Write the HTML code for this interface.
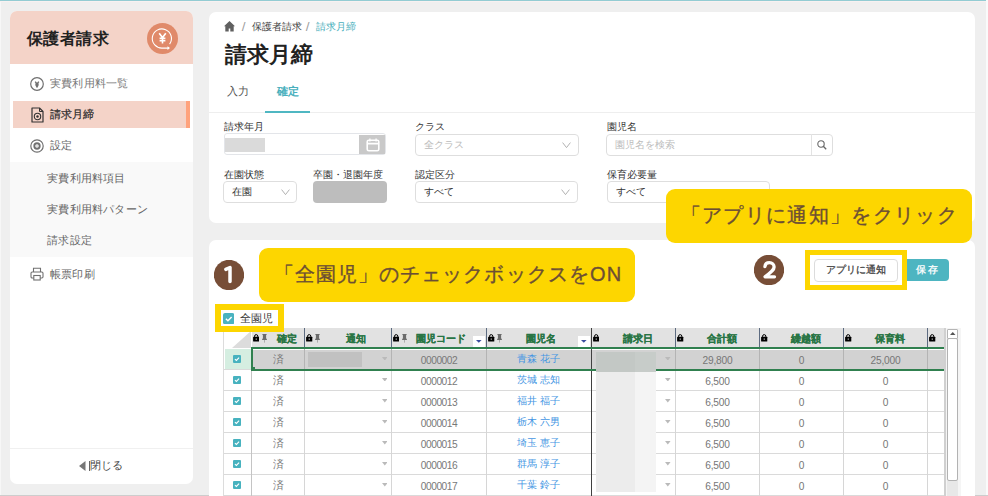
<!DOCTYPE html><html><head><meta charset="utf-8"><title>請求月締</title><style>
*{margin:0;padding:0;box-sizing:border-box}
html,body{width:988px;height:496px;overflow:hidden;background:#efefef;font-family:"Liberation Sans",sans-serif;color:#333}
.a{position:absolute;white-space:nowrap}
.card{position:absolute;background:#fff;border-radius:7px;overflow:hidden}
.t{position:absolute;white-space:nowrap;line-height:1}
</style></head><body>
<div class="a" style="left:0;top:0;width:986px;height:1px;background:#93ccd3"></div>
<div class="a" style="left:0;top:1px;width:986px;height:1px;background:#f8f1f1"></div>
<div class="a" style="left:0;top:2px;width:1px;height:494px;background:#f7f7f7"></div>
<div class="a" style="left:986px;top:0;width:2px;height:496px;background:#fafafa"></div>
<div class="a" style="left:0;top:495px;width:988px;height:1px;background:#cdcdcd"></div>
<div class="card" style="left:10px;top:11px;width:183px;height:473px">
<div class="a" style="left:0;top:0;width:183px;height:53px;background:#f4d3c8"></div>
<div class="t" style="left:16.8px;top:19.8px;font-size:16px;letter-spacing:0.5px;font-weight:bold;color:#222">保護者請求</div>
<svg class="a" style="left:137px;top:11.5px" width="31" height="31" viewBox="0 0 31 31">
<circle cx="15.5" cy="15.5" r="15.5" fill="#e08a6a"/>
<path d="M22.6 21.2 A9.6 9.6 0 1 0 15.5 25.1 L21.5 25.1" fill="none" stroke="#fff" stroke-width="1.1"/>
<path d="M20.5 23.3 L23 25.1 L20.5 26.9 Z" fill="#fff"/>
<path d="M12.2 10.2 L15.5 14.6 L18.8 10.2 M15.5 14.6 L15.5 20.6 M12.6 15.2 H18.4 M12.6 17.6 H18.4" fill="none" stroke="#fff" stroke-width="1.6"/>
</svg>
<svg class="a" style="left:20px;top:66px" width="14" height="14" viewBox="0 0 14 14">
<circle cx="7" cy="7" r="6.3" fill="none" stroke="#707070" stroke-width="1.2"/>
<path d="M5.2 4.6 L7 7 L8.8 4.6 M7 6.6 V10.4" fill="none" stroke="#707070" stroke-width="1.4"/><path d="M5.2 6.6 H8.8 L8.4 9 L7 10.6 L5.6 9 Z" fill="#707070"/>
</svg>
<div class="t" style="left:40px;top:67px;font-size:11.3px;letter-spacing:0.2px;color:#777">実費利用料一覧</div>
<div class="a" style="left:3px;top:89.5px;width:177px;height:27.5px;background:#f4d3c8"></div>
<div class="a" style="left:176px;top:89.5px;width:4px;height:27.5px;background:#ffa27c"></div>
<svg class="a" style="left:21px;top:96px" width="13" height="16" viewBox="0 0 13 16">
<path d="M1 1 H8.5 L12 4.5 V15 H1 Z" fill="none" stroke="#333" stroke-width="1.2" stroke-linejoin="round"/>
<path d="M8.5 1 V4.5 H12" fill="none" stroke="#333" stroke-width="1"/>
<circle cx="6.5" cy="9.5" r="3.2" fill="none" stroke="#333" stroke-width="1.1"/>
<circle cx="6.5" cy="9.5" r="1.2" fill="#333"/>
</svg>
<div class="t" style="left:40px;top:98px;font-size:11.3px;color:#2a2a2a;-webkit-text-stroke:0.2px #2a2a2a">請求月締</div>
<svg class="a" style="left:20px;top:127.5px" width="14" height="14" viewBox="0 0 14 14">
<circle cx="7" cy="7" r="6.2" fill="none" stroke="#707070" stroke-width="1.2"/>
<circle cx="7" cy="7" r="2.7" fill="none" stroke="#707070" stroke-width="1.9"/><circle cx="7" cy="7" r="0.7" fill="#aaa"/>
</svg>
<div class="t" style="left:40px;top:129px;font-size:11.3px;letter-spacing:0.2px;color:#666">設定</div>
<div class="a" style="left:0;top:151.3px;width:183px;height:94.4px;background:#f9f9f9"></div>
<div class="t" style="left:37.3px;top:161.5px;font-size:11.3px;letter-spacing:0.2px;color:#666">実費利用料項目</div>
<div class="t" style="left:37.3px;top:193px;font-size:11.3px;letter-spacing:0.2px;color:#666">実費利用料パターン</div>
<div class="t" style="left:37.3px;top:224px;font-size:11.3px;letter-spacing:0.2px;color:#666">請求設定</div>
<svg class="a" style="left:20px;top:256px" width="14" height="14" viewBox="0 0 14 14">
<path d="M3.5 5 V1.2 H10.5 V5" fill="none" stroke="#707070" stroke-width="1.1"/>
<rect x="1" y="5" width="12" height="6" rx="1.2" fill="none" stroke="#707070" stroke-width="1.1"/>
<rect x="3.8" y="8.5" width="6.4" height="4.5" fill="#fff" stroke="#707070" stroke-width="1.1"/>
</svg>
<div class="t" style="left:40px;top:258px;font-size:11.3px;letter-spacing:0.2px;color:#666">帳票印刷</div>
<div class="a" style="left:0;top:436.5px;width:183px;height:1px;background:#f0f0f0"></div>
<svg class="a" style="left:69px;top:449.5px" width="7" height="10" viewBox="0 0 7 10"><path d="M6.5 0 V10 L0 5 Z" fill="#777"/></svg>
<div class="a" style="left:78.7px;top:449.5px;width:1.3px;height:10px;background:#666"></div>
<div class="t" style="left:80px;top:448.5px;font-size:11.3px;color:#444">閉じる</div>
</div>
<div class="card" style="left:209px;top:12px;width:766px;height:211px">
<svg class="a" style="left:15px;top:9px" width="11" height="10.6" viewBox="0 0 11 10.6">
<path d="M5.5 0 L11 5.3 H9.7 V10.6 H6.3 V7.4 H4.7 V10.6 H1.3 V5.3 H0 Z" fill="#606060"/></svg>
<div class="t" style="left:32.8px;top:8.3px;font-size:13.5px;color:#a0a0a0">/</div>
<div class="t" style="left:43px;top:9.7px;font-size:9.8px;color:#444">保護者請求</div>
<div class="t" style="left:96.8px;top:8.3px;font-size:13.5px;color:#a0a0a0">/</div>
<div class="t" style="left:107px;top:9.7px;font-size:9.8px;color:#4ab0bd">請求月締</div>
<div class="t" style="left:15.5px;top:32.5px;font-size:21.5px;font-weight:bold;color:#222">請求月締</div>
<div class="t" style="left:17.5px;top:73.5px;font-size:11.3px;color:#555">入力</div>
<div class="t" style="left:68px;top:73.5px;font-size:11.3px;font-weight:bold;color:#4ab0bd">確定</div>
<div class="a" style="left:0;top:100px;width:766px;height:1px;background:#eeeeee"></div>
<div class="a" style="left:56.2px;top:98.8px;width:44.6px;height:1.8px;background:#4fb7c2"></div>
<div class="t" style="left:15px;top:109.5px;font-size:9.8px;color:#333">請求年月</div>
<div class="t" style="left:206px;top:109.5px;font-size:9.8px;color:#333">クラス</div>
<div class="t" style="left:397.5px;top:109.5px;font-size:9.8px;color:#333">園児名</div>
<div class="t" style="left:15px;top:157.5px;font-size:9.8px;color:#333">在園状態</div>
<div class="t" style="left:103.5px;top:157.5px;font-size:9.8px;color:#333">卒園・退園年度</div>
<div class="t" style="left:206px;top:157.5px;font-size:9.8px;color:#333">認定区分</div>
<div class="t" style="left:397.5px;top:157.5px;font-size:9.8px;color:#333">保育必要量</div>
<div class="a" style="left:14.5px;top:121.2px;width:162.5px;height:22.2px;border:1.5px solid #e3e5e9;border-radius:3px;background:#fff"></div>
<div class="a" style="left:16px;top:126px;width:40px;height:13.6px;background:#dadada"></div>
<div class="a" style="left:150.4px;top:123.1px;width:25.4px;height:18.7px;background:#c9c9c9"></div>
<svg class="a" style="left:156.5px;top:125.7px" width="14" height="14" viewBox="0 0 14 14">
<rect x="1.2" y="2.2" width="11.6" height="10.6" rx="1.6" fill="none" stroke="#fff" stroke-width="1.6"/>
<path d="M1.2 5.6 H12.8" stroke="#fff" stroke-width="1.6"/><path d="M3.9 0.6 V3.4 M10.1 0.6 V3.4" stroke="#fff" stroke-width="1.3"/></svg>
<div class="a" style="left:205.8px;top:121.5px;width:164px;height:22px;border:1px solid #dedede;border-radius:4px;background:#fff"></div>
<div class="t" style="left:214.8px;top:127.5px;font-size:10px;color:#bbb">全クラス</div>
<svg class="a" style="left:353.0px;top:129.5px" width="9" height="6.5" viewBox="0 0 9 6.5"><path d="M0.6 0.6 L4.5 5.6 L8.4 0.6" fill="none" stroke="#a8a8a8" stroke-width="0.9"/></svg>
<div class="a" style="left:397.4px;top:121.5px;width:226.5px;height:22px;border:1px solid #dedede;border-radius:4px;background:#fff"></div>
<div class="a" style="left:602px;top:122px;width:1px;height:21px;background:#e3e3e3"></div>
<div class="t" style="left:405.7px;top:127.5px;font-size:10px;color:#bbb">園児名を検索</div>
<svg class="a" style="left:608px;top:127.5px" width="10" height="10" viewBox="0 0 10 10">
<circle cx="4" cy="4" r="3.2" fill="none" stroke="#666" stroke-width="1.1"/><path d="M6.3 6.3 L9.2 9.2" stroke="#666" stroke-width="1.3"/></svg>
<div class="a" style="left:14.1px;top:169px;width:74.2px;height:22px;border:1px solid #dedede;border-radius:4px;background:#fff"></div>
<div class="t" style="left:23.1px;top:175px;font-size:10px;color:#333">在園</div>
<svg class="a" style="left:71.5px;top:177px" width="9" height="6.5" viewBox="0 0 9 6.5"><path d="M0.6 0.6 L4.5 5.6 L8.4 0.6" fill="none" stroke="#a8a8a8" stroke-width="0.9"/></svg>
<div class="a" style="left:103.5px;top:169px;width:74px;height:22px;border-radius:4px;background:#bdbdbd"></div>
<div class="a" style="left:205.6px;top:169.3px;width:163.5px;height:22px;border:1px solid #dedede;border-radius:4px;background:#fff"></div>
<div class="t" style="left:214.6px;top:175.3px;font-size:10px;color:#333">すべて</div>
<svg class="a" style="left:352.3px;top:177.3px" width="9" height="6.5" viewBox="0 0 9 6.5"><path d="M0.6 0.6 L4.5 5.6 L8.4 0.6" fill="none" stroke="#a8a8a8" stroke-width="0.9"/></svg>
<div class="a" style="left:397.5px;top:169px;width:163px;height:22px;border:1px solid #dedede;border-radius:4px;background:#fff"></div>
<div class="t" style="left:406.5px;top:175px;font-size:10px;color:#333">すべて</div>
</div>
<div class="card" style="left:209px;top:240px;width:766px;height:270px">
</div>
<div class="a" style="left:222.8px;top:328px;width:28.19999999999999px;height:168px;background:#fff;border-left:1px solid #dcdcdc"></div>
<svg class="a" style="left:232px;top:331px" width="19" height="17" viewBox="0 0 19 17"><path d="M19 0 V17 H0 Z" fill="#dcdcdc"/></svg>
<div class="a" style="left:251px;top:328px;width:693.5px;height:20px;background:#e2e2e2;border-left:1px solid #fff"></div>
<div class="a" style="left:223.5px;top:368.6px;width:721.0px;height:1px;background:#dadada"></div>
<div class="a" style="left:223.5px;top:389.7px;width:721.0px;height:1px;background:#dadada"></div>
<div class="a" style="left:223.5px;top:410.8px;width:721.0px;height:1px;background:#dadada"></div>
<div class="a" style="left:223.5px;top:431.9px;width:721.0px;height:1px;background:#dadada"></div>
<div class="a" style="left:223.5px;top:453.0px;width:721.0px;height:1px;background:#dadada"></div>
<div class="a" style="left:223.5px;top:474.1px;width:721.0px;height:1px;background:#dadada"></div>
<div class="a" style="left:223.5px;top:495.2px;width:721.0px;height:1px;background:#dadada"></div>
<div class="a" style="left:224.5px;top:349px;width:26.5px;height:20px;background:#d5eee1"></div>
<div class="a" style="left:252.5px;top:350px;width:692.0px;height:18.5px;background:#d2d2d2"></div>
<div class="a" style="left:304.0px;top:348px;width:1px;height:148px;background:#d6d6d6"></div>
<div class="a" style="left:390.5px;top:348px;width:1px;height:148px;background:#d6d6d6"></div>
<div class="a" style="left:486.0px;top:348px;width:1px;height:148px;background:#d6d6d6"></div>
<div class="a" style="left:675.0px;top:348px;width:1px;height:148px;background:#d6d6d6"></div>
<div class="a" style="left:759.0px;top:348px;width:1px;height:148px;background:#d6d6d6"></div>
<div class="a" style="left:843.0px;top:348px;width:1px;height:148px;background:#d6d6d6"></div>
<div class="a" style="left:927.0px;top:348px;width:1px;height:148px;background:#d6d6d6"></div>
<div class="a" style="left:304.0px;top:349px;width:1px;height:20px;background:#b4b4b4"></div>
<div class="a" style="left:390.5px;top:349px;width:1px;height:20px;background:#b4b4b4"></div>
<div class="a" style="left:486.0px;top:349px;width:1px;height:20px;background:#b4b4b4"></div>
<div class="a" style="left:675.0px;top:349px;width:1px;height:20px;background:#b4b4b4"></div>
<div class="a" style="left:759.0px;top:349px;width:1px;height:20px;background:#b4b4b4"></div>
<div class="a" style="left:843.0px;top:349px;width:1px;height:20px;background:#b4b4b4"></div>
<div class="a" style="left:927.0px;top:349px;width:1px;height:20px;background:#b4b4b4"></div>
<div class="a" style="left:304.0px;top:328px;width:1px;height:20px;background:#5d6b80"></div>
<div class="a" style="left:390.5px;top:328px;width:1px;height:20px;background:#5d6b80"></div>
<div class="a" style="left:486.0px;top:328px;width:1px;height:20px;background:#5d6b80"></div>
<div class="a" style="left:590.5px;top:328px;width:1px;height:20px;background:#5d6b80"></div>
<div class="a" style="left:675.0px;top:328px;width:1px;height:20px;background:#5d6b80"></div>
<div class="a" style="left:759.0px;top:328px;width:1px;height:20px;background:#5d6b80"></div>
<div class="a" style="left:843.0px;top:328px;width:1px;height:20px;background:#5d6b80"></div>
<div class="a" style="left:927.0px;top:328px;width:1px;height:20px;background:#5d6b80"></div>
<div class="a" style="left:250.5px;top:348px;width:1px;height:148px;background:#c4c4c4"></div>
<div class="a" style="left:590.5px;top:328px;width:1.2px;height:168px;background:#404040"></div>
<svg class="a" style="left:252.7px;top:334.1px" width="6.4" height="7.6" viewBox="0 0 6.4 7.6"><path d="M1.6 3.2 V2.2 A1.6 1.6 0 0 1 4.8 2.2 V3.2" fill="none" stroke="#000" stroke-width="1"/><rect x="0.1" y="2.8" width="6.2" height="4.8" rx="0.5" fill="#000"/><rect x="2.7" y="4.6" width="1.1" height="1" fill="#fff"/></svg>
<svg class="a" style="left:261.6px;top:334px" width="5" height="8.6" viewBox="0 0 5 8.6"><path d="M0.4 0 H4.6 V1.1 H4.1 V4.2 L4.9 5.2 V6 H0.1 V5.2 L0.9 4.2 V1.1 H0.4 Z" fill="#6b6b6b"/><rect x="2.1" y="6" width="0.8" height="2.6" fill="#a0a0a0"/></svg>
<svg class="a" style="left:306.2px;top:334.1px" width="6.4" height="7.6" viewBox="0 0 6.4 7.6"><path d="M1.6 3.2 V2.2 A1.6 1.6 0 0 1 4.8 2.2 V3.2" fill="none" stroke="#000" stroke-width="1"/><rect x="0.1" y="2.8" width="6.2" height="4.8" rx="0.5" fill="#000"/><rect x="2.7" y="4.6" width="1.1" height="1" fill="#fff"/></svg>
<svg class="a" style="left:315.1px;top:334px" width="5" height="8.6" viewBox="0 0 5 8.6"><path d="M0.4 0 H4.6 V1.1 H4.1 V4.2 L4.9 5.2 V6 H0.1 V5.2 L0.9 4.2 V1.1 H0.4 Z" fill="#6b6b6b"/><rect x="2.1" y="6" width="0.8" height="2.6" fill="#a0a0a0"/></svg>
<svg class="a" style="left:392.7px;top:334.1px" width="6.4" height="7.6" viewBox="0 0 6.4 7.6"><path d="M1.6 3.2 V2.2 A1.6 1.6 0 0 1 4.8 2.2 V3.2" fill="none" stroke="#000" stroke-width="1"/><rect x="0.1" y="2.8" width="6.2" height="4.8" rx="0.5" fill="#000"/><rect x="2.7" y="4.6" width="1.1" height="1" fill="#fff"/></svg>
<svg class="a" style="left:401.6px;top:334px" width="5" height="8.6" viewBox="0 0 5 8.6"><path d="M0.4 0 H4.6 V1.1 H4.1 V4.2 L4.9 5.2 V6 H0.1 V5.2 L0.9 4.2 V1.1 H0.4 Z" fill="#6b6b6b"/><rect x="2.1" y="6" width="0.8" height="2.6" fill="#a0a0a0"/></svg>
<svg class="a" style="left:488.2px;top:334.1px" width="6.4" height="7.6" viewBox="0 0 6.4 7.6"><path d="M1.6 3.2 V2.2 A1.6 1.6 0 0 1 4.8 2.2 V3.2" fill="none" stroke="#000" stroke-width="1"/><rect x="0.1" y="2.8" width="6.2" height="4.8" rx="0.5" fill="#000"/><rect x="2.7" y="4.6" width="1.1" height="1" fill="#fff"/></svg>
<svg class="a" style="left:497.1px;top:334px" width="5" height="8.6" viewBox="0 0 5 8.6"><path d="M0.4 0 H4.6 V1.1 H4.1 V4.2 L4.9 5.2 V6 H0.1 V5.2 L0.9 4.2 V1.1 H0.4 Z" fill="#6b6b6b"/><rect x="2.1" y="6" width="0.8" height="2.6" fill="#a0a0a0"/></svg>
<svg class="a" style="left:592.7px;top:334.1px" width="6.4" height="7.6" viewBox="0 0 6.4 7.6"><path d="M1.6 3.2 V2.2 A1.6 1.6 0 0 1 4.8 2.2 V3.2" fill="none" stroke="#000" stroke-width="1"/><rect x="0.1" y="2.8" width="6.2" height="4.8" rx="0.5" fill="#000"/><rect x="2.7" y="4.6" width="1.1" height="1" fill="#fff"/></svg>
<svg class="a" style="left:677.2px;top:334.1px" width="6.4" height="7.6" viewBox="0 0 6.4 7.6"><path d="M1.6 3.2 V2.2 A1.6 1.6 0 0 1 4.8 2.2 V3.2" fill="none" stroke="#000" stroke-width="1"/><rect x="0.1" y="2.8" width="6.2" height="4.8" rx="0.5" fill="#000"/><rect x="2.7" y="4.6" width="1.1" height="1" fill="#fff"/></svg>
<svg class="a" style="left:761.2px;top:334.1px" width="6.4" height="7.6" viewBox="0 0 6.4 7.6"><path d="M1.6 3.2 V2.2 A1.6 1.6 0 0 1 4.8 2.2 V3.2" fill="none" stroke="#000" stroke-width="1"/><rect x="0.1" y="2.8" width="6.2" height="4.8" rx="0.5" fill="#000"/><rect x="2.7" y="4.6" width="1.1" height="1" fill="#fff"/></svg>
<svg class="a" style="left:845.2px;top:334.1px" width="6.4" height="7.6" viewBox="0 0 6.4 7.6"><path d="M1.6 3.2 V2.2 A1.6 1.6 0 0 1 4.8 2.2 V3.2" fill="none" stroke="#000" stroke-width="1"/><rect x="0.1" y="2.8" width="6.2" height="4.8" rx="0.5" fill="#000"/><rect x="2.7" y="4.6" width="1.1" height="1" fill="#fff"/></svg>
<svg class="a" style="left:929.2px;top:334.1px" width="6.4" height="7.6" viewBox="0 0 6.4 7.6"><path d="M1.6 3.2 V2.2 A1.6 1.6 0 0 1 4.8 2.2 V3.2" fill="none" stroke="#000" stroke-width="1"/><rect x="0.1" y="2.8" width="6.2" height="4.8" rx="0.5" fill="#000"/><rect x="2.7" y="4.6" width="1.1" height="1" fill="#fff"/></svg>
<div class="t" style="left:246.7px;top:333.8px;width:80px;text-align:center;font-size:10px;font-weight:bold;color:#287544;-webkit-text-stroke:0.15px #287544">確定</div>
<div class="t" style="left:316.2px;top:333.8px;width:80px;text-align:center;font-size:10px;font-weight:bold;color:#287544;-webkit-text-stroke:0.15px #287544">通知</div>
<div class="t" style="left:400.5px;top:333.8px;width:80px;text-align:center;font-size:10px;font-weight:bold;color:#287544;-webkit-text-stroke:0.15px #287544">園児コード</div>
<div class="t" style="left:501px;top:333.8px;width:80px;text-align:center;font-size:10px;font-weight:bold;color:#287544;-webkit-text-stroke:0.15px #287544">園児名</div>
<div class="t" style="left:597.7px;top:333.8px;width:80px;text-align:center;font-size:10px;font-weight:bold;color:#287544;-webkit-text-stroke:0.15px #287544">請求日</div>
<div class="t" style="left:681.8px;top:333.8px;width:80px;text-align:center;font-size:10px;font-weight:bold;color:#287544;-webkit-text-stroke:0.15px #287544">合計額</div>
<div class="t" style="left:766px;top:333.8px;width:80px;text-align:center;font-size:10px;font-weight:bold;color:#287544;-webkit-text-stroke:0.15px #287544">繰越額</div>
<div class="t" style="left:850px;top:333.8px;width:80px;text-align:center;font-size:10px;font-weight:bold;color:#287544;-webkit-text-stroke:0.15px #287544">保育料</div>
<div class="a" style="left:473px;top:336px;width:11.5px;height:11px;background:#fff"></div>
<svg class="a" style="left:476.2px;top:340px" width="5.6" height="2.8" viewBox="0 0 5.6 2.8"><path d="M0 0 H5.6 L2.8 2.8 Z" fill="#3b4d9e"/></svg>
<div class="a" style="left:578px;top:336px;width:11.5px;height:11px;background:#fff"></div>
<svg class="a" style="left:581.2px;top:340px" width="5.6" height="2.8" viewBox="0 0 5.6 2.8"><path d="M0 0 H5.6 L2.8 2.8 Z" fill="#3b4d9e"/></svg>
<svg class="a" style="left:233.4px;top:354.6px" width="8" height="8" viewBox="0 0 8 8"><rect width="8" height="8" rx="1" fill="#47b2bf"/><path d="M1.9 4.1 L3.4 5.5 L6.1 2.7" fill="none" stroke="#fff" stroke-width="1.1"/></svg>
<div class="t" style="left:263px;top:353.7px;width:31px;text-align:center;font-size:11.2px;color:#7a7a7a">済</div>
<svg class="a" style="left:381.5px;top:356.75px" width="5.6" height="3.6" viewBox="0 0 5.6 3.6"><path d="M0 0 H5.6 L2.8 3.6 Z" fill="#bababa"/></svg>
<div class="t" style="left:399px;top:355.6px;width:80px;text-align:center;font-size:10.2px;letter-spacing:-0.45px;color:#787878">0000002</div>
<div class="t" style="left:498px;top:353.6px;width:81px;text-align:center;font-size:10.2px;color:#4596e3">青森 花子</div>
<svg class="a" style="left:665.3px;top:356.75px" width="5.6" height="3.6" viewBox="0 0 5.6 3.6"><path d="M0 0 H5.6 L2.8 3.6 Z" fill="#bababa"/></svg>
<div class="t" style="left:683px;top:355.6px;width:69px;text-align:center;font-size:10.2px;letter-spacing:-0.2px;color:#767676">29,800</div>
<div class="t" style="left:767px;top:355.6px;width:69px;text-align:center;font-size:10.2px;letter-spacing:-0.2px;color:#767676">0</div>
<div class="t" style="left:851px;top:355.6px;width:69px;text-align:center;font-size:10.2px;letter-spacing:-0.2px;color:#767676">25,000</div>
<svg class="a" style="left:233.4px;top:375.7px" width="8" height="8" viewBox="0 0 8 8"><rect width="8" height="8" rx="1" fill="#47b2bf"/><path d="M1.9 4.1 L3.4 5.5 L6.1 2.7" fill="none" stroke="#fff" stroke-width="1.1"/></svg>
<div class="t" style="left:263px;top:374.8px;width:31px;text-align:center;font-size:11.2px;color:#7a7a7a">済</div>
<svg class="a" style="left:381.5px;top:377.85px" width="5.6" height="3.6" viewBox="0 0 5.6 3.6"><path d="M0 0 H5.6 L2.8 3.6 Z" fill="#bababa"/></svg>
<div class="t" style="left:399px;top:376.7px;width:80px;text-align:center;font-size:10.2px;letter-spacing:-0.45px;color:#787878">0000012</div>
<div class="t" style="left:498px;top:374.7px;width:81px;text-align:center;font-size:10.2px;color:#4596e3">茨城 志知</div>
<svg class="a" style="left:665.3px;top:377.85px" width="5.6" height="3.6" viewBox="0 0 5.6 3.6"><path d="M0 0 H5.6 L2.8 3.6 Z" fill="#bababa"/></svg>
<div class="t" style="left:683px;top:376.7px;width:69px;text-align:center;font-size:10.2px;letter-spacing:-0.2px;color:#767676">6,500</div>
<div class="t" style="left:767px;top:376.7px;width:69px;text-align:center;font-size:10.2px;letter-spacing:-0.2px;color:#767676">0</div>
<div class="t" style="left:851px;top:376.7px;width:69px;text-align:center;font-size:10.2px;letter-spacing:-0.2px;color:#767676">0</div>
<svg class="a" style="left:233.4px;top:396.8px" width="8" height="8" viewBox="0 0 8 8"><rect width="8" height="8" rx="1" fill="#47b2bf"/><path d="M1.9 4.1 L3.4 5.5 L6.1 2.7" fill="none" stroke="#fff" stroke-width="1.1"/></svg>
<div class="t" style="left:263px;top:395.9px;width:31px;text-align:center;font-size:11.2px;color:#7a7a7a">済</div>
<svg class="a" style="left:381.5px;top:398.95px" width="5.6" height="3.6" viewBox="0 0 5.6 3.6"><path d="M0 0 H5.6 L2.8 3.6 Z" fill="#bababa"/></svg>
<div class="t" style="left:399px;top:397.8px;width:80px;text-align:center;font-size:10.2px;letter-spacing:-0.45px;color:#787878">0000013</div>
<div class="t" style="left:498px;top:395.8px;width:81px;text-align:center;font-size:10.2px;color:#4596e3">福井 福子</div>
<svg class="a" style="left:665.3px;top:398.95px" width="5.6" height="3.6" viewBox="0 0 5.6 3.6"><path d="M0 0 H5.6 L2.8 3.6 Z" fill="#bababa"/></svg>
<div class="t" style="left:683px;top:397.8px;width:69px;text-align:center;font-size:10.2px;letter-spacing:-0.2px;color:#767676">6,500</div>
<div class="t" style="left:767px;top:397.8px;width:69px;text-align:center;font-size:10.2px;letter-spacing:-0.2px;color:#767676">0</div>
<div class="t" style="left:851px;top:397.8px;width:69px;text-align:center;font-size:10.2px;letter-spacing:-0.2px;color:#767676">0</div>
<svg class="a" style="left:233.4px;top:417.9px" width="8" height="8" viewBox="0 0 8 8"><rect width="8" height="8" rx="1" fill="#47b2bf"/><path d="M1.9 4.1 L3.4 5.5 L6.1 2.7" fill="none" stroke="#fff" stroke-width="1.1"/></svg>
<div class="t" style="left:263px;top:417.0px;width:31px;text-align:center;font-size:11.2px;color:#7a7a7a">済</div>
<svg class="a" style="left:381.5px;top:420.05px" width="5.6" height="3.6" viewBox="0 0 5.6 3.6"><path d="M0 0 H5.6 L2.8 3.6 Z" fill="#bababa"/></svg>
<div class="t" style="left:399px;top:418.9px;width:80px;text-align:center;font-size:10.2px;letter-spacing:-0.45px;color:#787878">0000014</div>
<div class="t" style="left:498px;top:416.9px;width:81px;text-align:center;font-size:10.2px;color:#4596e3">栃木 六男</div>
<svg class="a" style="left:665.3px;top:420.05px" width="5.6" height="3.6" viewBox="0 0 5.6 3.6"><path d="M0 0 H5.6 L2.8 3.6 Z" fill="#bababa"/></svg>
<div class="t" style="left:683px;top:418.9px;width:69px;text-align:center;font-size:10.2px;letter-spacing:-0.2px;color:#767676">6,500</div>
<div class="t" style="left:767px;top:418.9px;width:69px;text-align:center;font-size:10.2px;letter-spacing:-0.2px;color:#767676">0</div>
<div class="t" style="left:851px;top:418.9px;width:69px;text-align:center;font-size:10.2px;letter-spacing:-0.2px;color:#767676">0</div>
<svg class="a" style="left:233.4px;top:438.9px" width="8" height="8" viewBox="0 0 8 8"><rect width="8" height="8" rx="1" fill="#47b2bf"/><path d="M1.9 4.1 L3.4 5.5 L6.1 2.7" fill="none" stroke="#fff" stroke-width="1.1"/></svg>
<div class="t" style="left:263px;top:438.1px;width:31px;text-align:center;font-size:11.2px;color:#7a7a7a">済</div>
<svg class="a" style="left:381.5px;top:441.15px" width="5.6" height="3.6" viewBox="0 0 5.6 3.6"><path d="M0 0 H5.6 L2.8 3.6 Z" fill="#bababa"/></svg>
<div class="t" style="left:399px;top:439.9px;width:80px;text-align:center;font-size:10.2px;letter-spacing:-0.45px;color:#787878">0000015</div>
<div class="t" style="left:498px;top:437.9px;width:81px;text-align:center;font-size:10.2px;color:#4596e3">埼玉 恵子</div>
<svg class="a" style="left:665.3px;top:441.15px" width="5.6" height="3.6" viewBox="0 0 5.6 3.6"><path d="M0 0 H5.6 L2.8 3.6 Z" fill="#bababa"/></svg>
<div class="t" style="left:683px;top:439.9px;width:69px;text-align:center;font-size:10.2px;letter-spacing:-0.2px;color:#767676">6,500</div>
<div class="t" style="left:767px;top:439.9px;width:69px;text-align:center;font-size:10.2px;letter-spacing:-0.2px;color:#767676">0</div>
<div class="t" style="left:851px;top:439.9px;width:69px;text-align:center;font-size:10.2px;letter-spacing:-0.2px;color:#767676">0</div>
<svg class="a" style="left:233.4px;top:460.1px" width="8" height="8" viewBox="0 0 8 8"><rect width="8" height="8" rx="1" fill="#47b2bf"/><path d="M1.9 4.1 L3.4 5.5 L6.1 2.7" fill="none" stroke="#fff" stroke-width="1.1"/></svg>
<div class="t" style="left:263px;top:459.2px;width:31px;text-align:center;font-size:11.2px;color:#7a7a7a">済</div>
<svg class="a" style="left:381.5px;top:462.25px" width="5.6" height="3.6" viewBox="0 0 5.6 3.6"><path d="M0 0 H5.6 L2.8 3.6 Z" fill="#bababa"/></svg>
<div class="t" style="left:399px;top:461.1px;width:80px;text-align:center;font-size:10.2px;letter-spacing:-0.45px;color:#787878">0000016</div>
<div class="t" style="left:498px;top:459.1px;width:81px;text-align:center;font-size:10.2px;color:#4596e3">群馬 淳子</div>
<svg class="a" style="left:665.3px;top:462.25px" width="5.6" height="3.6" viewBox="0 0 5.6 3.6"><path d="M0 0 H5.6 L2.8 3.6 Z" fill="#bababa"/></svg>
<div class="t" style="left:683px;top:461.1px;width:69px;text-align:center;font-size:10.2px;letter-spacing:-0.2px;color:#767676">6,500</div>
<div class="t" style="left:767px;top:461.1px;width:69px;text-align:center;font-size:10.2px;letter-spacing:-0.2px;color:#767676">0</div>
<div class="t" style="left:851px;top:461.1px;width:69px;text-align:center;font-size:10.2px;letter-spacing:-0.2px;color:#767676">0</div>
<svg class="a" style="left:233.4px;top:481.2px" width="8" height="8" viewBox="0 0 8 8"><rect width="8" height="8" rx="1" fill="#47b2bf"/><path d="M1.9 4.1 L3.4 5.5 L6.1 2.7" fill="none" stroke="#fff" stroke-width="1.1"/></svg>
<div class="t" style="left:263px;top:480.3px;width:31px;text-align:center;font-size:11.2px;color:#7a7a7a">済</div>
<svg class="a" style="left:381.5px;top:483.35px" width="5.6" height="3.6" viewBox="0 0 5.6 3.6"><path d="M0 0 H5.6 L2.8 3.6 Z" fill="#bababa"/></svg>
<div class="t" style="left:399px;top:482.2px;width:80px;text-align:center;font-size:10.2px;letter-spacing:-0.45px;color:#787878">0000017</div>
<div class="t" style="left:498px;top:480.2px;width:81px;text-align:center;font-size:10.2px;color:#4596e3">千葉 鈴子</div>
<svg class="a" style="left:665.3px;top:483.35px" width="5.6" height="3.6" viewBox="0 0 5.6 3.6"><path d="M0 0 H5.6 L2.8 3.6 Z" fill="#bababa"/></svg>
<div class="t" style="left:683px;top:482.2px;width:69px;text-align:center;font-size:10.2px;letter-spacing:-0.2px;color:#767676">6,500</div>
<div class="t" style="left:767px;top:482.2px;width:69px;text-align:center;font-size:10.2px;letter-spacing:-0.2px;color:#767676">0</div>
<div class="t" style="left:851px;top:482.2px;width:69px;text-align:center;font-size:10.2px;letter-spacing:-0.2px;color:#767676">0</div>
<div class="a" style="left:251px;top:347.4px;width:693.5px;height:1.6px;background:#30804f"></div>
<div class="a" style="left:251px;top:368.9px;width:693.5px;height:1.7px;background:#30804f"></div>
<div class="a" style="left:251px;top:347.4px;width:1.6px;height:23px;background:#30804f"></div>
<div class="a" style="left:250.5px;top:367.3px;width:4px;height:4px;background:#30804f"></div>
<div class="a" style="left:308px;top:352px;width:54px;height:14.6px;background:#c1c1c1"></div>
<div class="a" style="left:595.7px;top:351.7px;width:39.6px;height:140.3px;background:#ececec"></div>
<div class="a" style="left:635.3px;top:351.7px;width:20.4px;height:140.3px;background:#f4f4f4"></div>
<div class="a" style="left:595.7px;top:351.7px;width:39.6px;height:20.5px;background:#c3c8c5"></div>
<div class="a" style="left:635.3px;top:351.7px;width:20.4px;height:20.5px;background:#c7ccc9"></div>
<div class="a" style="left:944.3px;top:328px;width:1.7px;height:168px;background:#d0d0d0"></div>
<div class="a" style="left:946px;top:327.5px;width:15px;height:168.5px;background:#f5f5f5"></div>
<div class="a" style="left:947.3px;top:338px;width:10.4px;height:158px;background:#e8e8e8"></div>
<div class="a" style="left:947.2px;top:328.5px;width:10.6px;height:10.3px;background:#fff;border:1px solid #b5b5b5;border-radius:1px"></div>
<svg class="a" style="left:950px;top:331.5px" width="5.5" height="3" viewBox="0 0 5.5 3"><path d="M0 3 H5.5 L2.75 0 Z" fill="#555"/></svg>
<div class="a" style="left:947.2px;top:338px;width:10.6px;height:142.5px;background:#fff;border:1px solid #b2b2b2;border-radius:2px"></div>
<div class="a" style="left:666px;top:189px;width:305.6px;height:53.8px;background:#fdd600;border-radius:9px"></div>
<div class="t" style="left:680.5px;top:204.5px;font-size:20px;font-weight:500;letter-spacing:1.35px;color:#6c4e34;-webkit-text-stroke:0.35px #6c4e34">「アプリに通知」をクリック</div>
<div class="a" style="left:259px;top:248px;width:376.4px;height:54px;background:#fdd600;border-radius:9px"></div>
<div class="t" style="left:273.5px;top:263.5px;font-size:20px;font-weight:500;letter-spacing:1.1px;color:#6c4e34;-webkit-text-stroke:0.35px #6c4e34">「全園児」のチェックボックスをON</div>
<svg class="a" style="left:214.2px;top:259.6px" width="30" height="30" viewBox="0 0 30 30"><circle cx="15" cy="15" r="15.2" fill="#774e37"/><path d="M11.8 9.4 L16 7.5 V21.4" fill="none" stroke="#fff" stroke-width="3.5" stroke-linecap="round" stroke-linejoin="round"/></svg>
<svg class="a" style="left:754.2px;top:254.5px" width="30" height="30" viewBox="0 0 30 30"><circle cx="15" cy="15" r="15.2" fill="#774e37"/><path d="M10.9 11.6 C11.2 9 13 7.7 15.4 7.7 C18.2 7.7 20.1 9.5 20.1 11.9 C20.1 14.6 17.8 16.6 11 21.8 H20.5" fill="none" stroke="#fff" stroke-width="3.3" stroke-linecap="round" stroke-linejoin="round"/></svg>
<div class="a" style="left:215px;top:304px;width:69px;height:27.5px;border:6px solid #fdd600;background:#fff"></div>
<svg class="a" style="left:223px;top:312.5px" width="11.3" height="11.3" viewBox="0 0 11 11"><rect width="11" height="11" rx="2" fill="#4ab3c0"/><path d="M2.8 5.6 L4.8 7.5 L8.4 3.8" fill="none" stroke="#fff" stroke-width="1.4"/></svg>
<div class="t" style="left:240px;top:312.5px;font-size:11.3px;color:#333">全園児</div>
<div class="a" style="left:805px;top:250px;width:101.5px;height:39.5px;border:5px solid #fdd600;background:#fff"></div>
<div class="a" style="left:813.6px;top:258.8px;width:84.6px;height:23px;border:1px solid #dcdcdc;border-radius:4px;background:#fff"></div>
<div class="t" style="left:826px;top:265px;font-size:10px;color:#444;-webkit-text-stroke:0.3px #444">アプリに通知</div>
<div class="a" style="left:906.5px;top:258.8px;width:42.3px;height:22.3px;border-radius:0 4px 4px 0;background:#4db5c1"></div>
<div class="t" style="left:916px;top:265px;font-size:10px;letter-spacing:2.2px;color:#fff;-webkit-text-stroke:0.3px #fff">保存</div>
</body></html>
